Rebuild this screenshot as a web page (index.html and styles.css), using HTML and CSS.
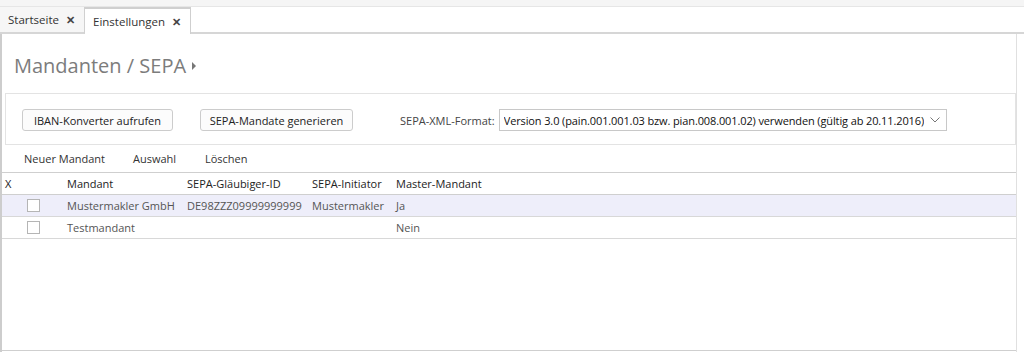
FILE: index.html
```html
<!DOCTYPE html>
<html lang="de">
<head>
    <meta charset="UTF-8">
    <title>Einstellungen</title>
    <link rel="stylesheet" href="styles.css">
</head>
<body>

<!-- oberer Rand -->
<div class="topstrip"></div>

<!-- Tabs -->
<div class="tabbar">
    <div class="tab">Startseite <span class="close">✕</span></div>
    <div class="tab active">Einstellungen <span class="close">✕</span></div>
    <div class="tabrest"></div>
</div>

<div class="page">
    <h1 class="title">Mandanten / SEPA <span class="arrow"></span></h1>

    <!-- Aktionen -->
    <div class="group">
        <button class="btn btn-iban">IBAN-Konverter aufrufen</button>
        <button class="btn btn-sepa">SEPA-Mandate generieren</button>
        <span class="label">SEPA-XML-Format:</span>
        <div class="select">
            <span class="select-text">Version 3.0 (pain.001.001.03 bzw. pian.008.001.02) verwenden (gültig ab 20.11.2016)</span>
            <svg class="chevron" width="10" height="6" viewBox="0 0 10 6"><path d="M0.5 0.5 L5 5 L9.5 0.5" fill="none" stroke="#777" stroke-width="1"/></svg>
        </div>
    </div>

    <!-- Toolbar -->
    <div class="toolbar">
        <span class="tool tool-new">Neuer Mandant</span>
        <span class="tool tool-sel">Auswahl</span>
        <span class="tool">Löschen</span>
    </div>

    <!-- Tabelle -->
    <div class="grid">
        <div class="row head">
            <div class="c c-x">X</div>
            <div class="c c-name">Mandant</div>
            <div class="c c-id">SEPA-Gläubiger-ID</div>
            <div class="c c-ini">SEPA-Initiator</div>
            <div class="c">Master-Mandant</div>
        </div>
        <div class="row selected">
            <div class="c c-x"><span class="check"></span></div>
            <div class="c c-name">Mustermakler GmbH</div>
            <div class="c c-id">DE98ZZZ09999999999</div>
            <div class="c c-ini">Mustermakler</div>
            <div class="c">Ja</div>
        </div>
        <div class="row">
            <div class="c c-x"><span class="check"></span></div>
            <div class="c c-name">Testmandant</div>
            <div class="c c-id"></div>
            <div class="c c-ini"></div>
            <div class="c">Nein</div>
        </div>
        <div class="empty"></div>
    </div>
</div>

</body>
</html>
```

FILE: styles.css
```css
body, html {
    margin: 0;
    padding: 0;
    height: 100%;
    overflow: hidden;
}

body {
    font-family: "Open Sans", "Noto Sans", sans-serif;
    font-size: 11px;
    color: #333;
    background: #fff;
}

/* oberer Rand */
.topstrip {
    height: 6px;
    background: #f5f5f5;
    border-bottom: 1px solid #e6e6e6;
}

/* Tabs */
.tabbar {
    display: flex;
    height: 27px;
}

.tab {
    display: flex;
    align-items: center;
    padding: 0 9px 0 8px;
    background: #f6f6f6;
    border-bottom: 2px solid #d6d6d6;
    border-right: 1px solid #d0d0d0;
    color: #333;
    font-size: 11.5px;
    white-space: nowrap;
}

.tab.active {
    background: #fff;
    border: 1px solid #cfcfcf;
    border-bottom: none;
    border-top-width: 2px;
    border-left: none;
    padding: 0 9px 0 8px;
}

.close {
    font-size: 11px;
    font-weight: bold;
    margin-left: 7px;
    color: #444;
}

.tabrest {
    flex: 1;
    border-bottom: 2px solid #d6d6d6;
}

.page {
    width: 1014px;
    height: 318px;
    border-left: 2px solid #cdcdcd;
    border-right: 1px solid #e0e0e0;
}

/* Ueberschrift */
.title {
    margin: 0 0 9px 0;
    padding: 12px 0 0 12px;
    height: 38px;
    font-size: 20px;
    font-weight: normal;
    color: #7c7c7c;
    display: flex;
    align-items: center;
    gap: 6px;
}

.arrow {
    width: 0;
    height: 0;
    border-top: 4px solid transparent;
    border-bottom: 4px solid transparent;
    border-left: 4px solid #777;
    margin-top: 2px;
}

/* Gruppe */
.group {
    margin: 0 0 0 3px;
    height: 52px;
    border: 1px solid #e3e3e3;
    display: flex;
    align-items: center;
    padding-top: 2px;
    box-sizing: border-box;
}

.btn {
    font-family: inherit;
    font-size: 11px;
    color: #222;
    height: 22px;
    background: #fcfcfc;
    border: 1px solid #cccccc;
    border-radius: 3px;
    padding: 0;
}

.btn-iban {
    width: 151px;
    margin-left: 16px;
}

.btn-sepa {
    width: 153px;
    margin-left: 27px;
}

.label {
    margin-left: 47px;
    color: #444;
    font-size: 11px;
}

.select {
    margin-left: 4px;
    width: 448px;
    height: 22px;
    box-sizing: border-box;
    border: 1px solid #c8c8c8;
    display: flex;
    align-items: center;
    padding: 0 6px 0 4px;
}

.select-text {
    flex: 1;
    overflow: hidden;
    white-space: nowrap;
    color: #111;
    font-size: 11px;
    letter-spacing: -0.12px;
}

.chevron {
    margin-left: 6px;
}

/* Toolbar */
.toolbar {
    height: 27px;
    display: flex;
    align-items: center;
    padding-left: 22px;
    color: #333;
    font-size: 11px;
}

.tool-new {
    width: 109px;
}

.tool-sel {
    width: 72px;
}

/* Tabelle */
.grid {
    border-top: 1px solid #cfcfcf;
}

.row {
    display: flex;
    align-items: center;
    height: 21px;
    border-bottom: 1px solid #d8d8d8;
    color: #555;
}

.row.head {
    color: #222;
    border-bottom-color: #cfcfcf;
}

.row.selected {
    background: #eeeefa;
}

.c {
    white-space: nowrap;
}

.c-x {
    width: 65px;
    padding-left: 3px;
    box-sizing: border-box;
}

.c-name {
    width: 120px;
}

.c-id {
    width: 125px;
}

.c-ini {
    width: 84px;
}

.check {
    display: block;
    width: 11px;
    height: 11px;
    margin-left: 22px;
    border: 1px solid #b5b5b5;
    background: #fff;
}

.empty {
    height: 111px;
    border-bottom: 1px solid #cfcfcf;
}
```
